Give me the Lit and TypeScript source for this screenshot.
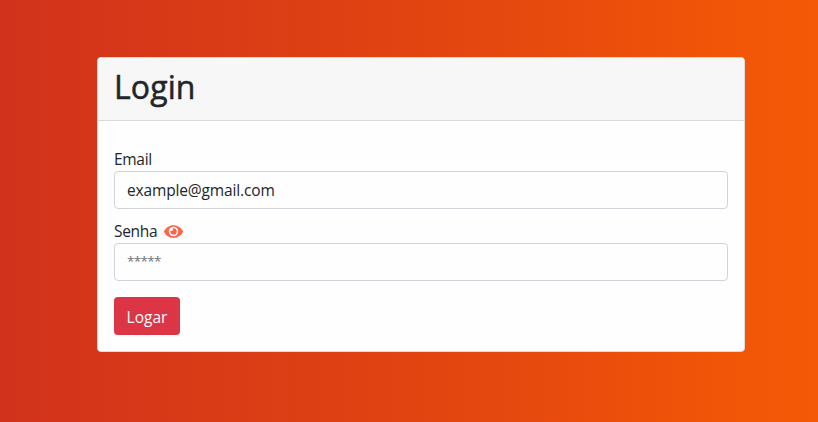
import { LitElement, html, css } from "lit";
import { customElement } from "lit/decorators.js";

@customElement("app-root")
export class AppRoot extends LitElement {
  static styles = css`
    :host {
      display: flex;
      flex-direction: column;
      align-items: center;
      box-sizing: border-box;
      width: 100%;
      height: 100vh;
      padding: 57px 73px 0 97px;
      overflow: hidden;
      background: linear-gradient(to right, #d1321c, #dd3f14 38%, #e84b0d 68%, #f15507 88%, #f45907);
      color: #212529;
      font: 400 16px/24px "Open Sans", "Noto Sans", sans-serif;
    }
    * {
      box-sizing: border-box;
    }
    .card {
      width: 100%;
      height: 295px;
      border: 1px solid #dcdcdf;
      border-radius: 4px;
      background: #fefefe;
      overflow: hidden;
    }
    .header {
      height: 63px;
      padding: 8px 16px;
      border-bottom: 1px solid #d9dade;
      background: #f7f7f7;
    }
    h1 {
      margin: 0;
      font-size: 32px;
      line-height: 42px;
      font-weight: 500;
      letter-spacing: 0.1px;
      -webkit-text-stroke: 0.5px #212529;
    }
    form {
      padding: 26px 16px 16px;
    }
    .field {
      display: flex;
      flex-direction: column;
      margin-bottom: 10px;
    }
    .field.last {
      margin-bottom: 16px;
    }
    label {
      display: flex;
      align-items: center;
      gap: 7px;
      height: 24px;
      font-size: 15.5px;
      letter-spacing: -0.3px;
    }
    input {
      width: 100%;
      height: 38px;
      padding: 6px 12px;
      border: 1px solid #ced4da;
      border-radius: 4px;
      outline: none;
      background: #fefefe;
      color: #212529;
      font: inherit;
      font-size: 15.5px;
      letter-spacing: -0.15px;
    }
    .last input {
      padding: 4px 12px 8px;
    }
    input::placeholder {
      color: #6c757d;
      opacity: 1;
      font-size: 13.5px;
      letter-spacing: -0.7px;
    }
    .eye {
      width: 19px;
      height: 17px;
      fill: #ff6347;
    }
    button {
      display: block;
      width: 66px;
      height: 38px;
      padding: 1px 0 0;
      border: 0;
      border-radius: 4px;
      background: #dc3545;
      color: #fff;
      font: inherit;
      font-size: 15.5px;
    }
  `;

  render() {
    return html`
      <main class="card">
        <header class="header"><h1>Login</h1></header>
        <form @submit=${(e: Event) => e.preventDefault()}>
          <div class="field">
            <label for="email">Email</label>
            <input id="email" type="text" value="example@gmail.com" spellcheck="false" />
          </div>
          <div class="field last">
            <label for="senha">
              <span>Senha</span>
              <svg class="eye" viewBox="0 0 576 512" preserveAspectRatio="none" aria-hidden="true">
                <path
                  d="M572.52 241.4C518.29 135.59 410.93 64 288 64S57.68 135.64 3.48 241.41a32.35 32.35 0 0 0 0 29.19C57.71 376.41 165.07 448 288 448s230.32-71.64 284.52-177.41a32.35 32.35 0 0 0 0-29.19zM288 400a144 144 0 1 1 144-144 143.93 143.93 0 0 1-144 144zm0-240a95.31 95.31 0 0 0-25.31 3.79 47.85 47.85 0 0 1-66.9 66.9A95.78 95.78 0 1 0 288 160z"
                />
              </svg>
            </label>
            <input id="senha" type="text" placeholder="*****" />
          </div>
          <button type="submit">Logar</button>
        </form>
      </main>
    `;
  }
}
